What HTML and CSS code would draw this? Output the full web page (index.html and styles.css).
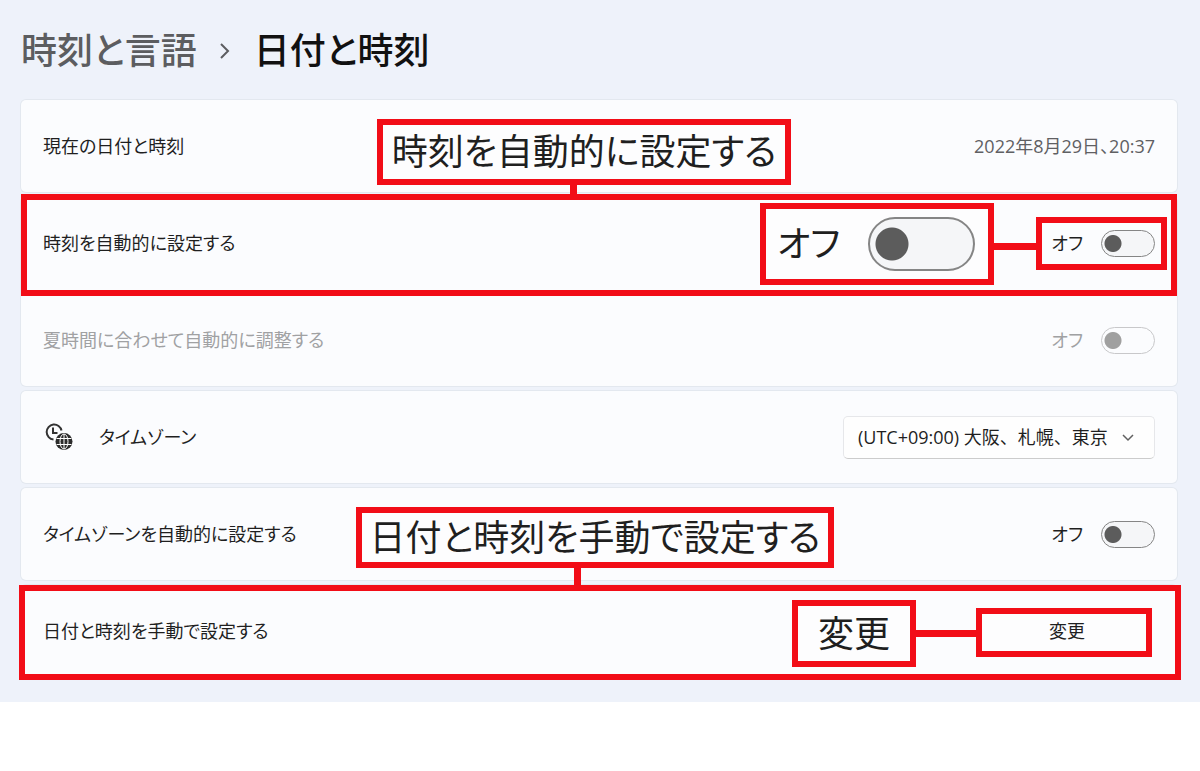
FILE: index.html
```
<!DOCTYPE html>
<html lang="ja">

<head>
  <title>日付と時刻</title>
  <meta charset="utf-8">
  <meta name="viewport" content="width=device-width, initial-scale=1">
  <link rel="stylesheet" href="styles.css">
</head>

<body>
  <main class="settings">
    <!-- Breadcrumb -->
    <h1 class="breadcrumb">
      <a href="#">時刻と言語</a>
      <svg class="crumb-arrow" viewBox="0 0 10 16" aria-hidden="true">
        <path d="M1 1l7 7-7 7" />
      </svg>
      <span>日付と時刻</span>
    </h1>

    <div class="cards">
      <!-- Current date and time -->
      <div class="card">
        <div class="row">
          <span class="name">現在の日付と時刻</span>
          <span class="date">2022年8月29日、20:37</span>
        </div>
      </div>

      <!-- Automatic time and daylight saving -->
      <div class="card">
        <div class="row row-auto">
          <label class="name" for="autoTime">時刻を自動的に設定する</label>
          <span class="state">オフ</span>
          <input class="toggle" type="checkbox" role="switch" id="autoTime">
          <div class="mark mark-row"></div>
          <div class="mark mark-toggle"></div>
          <div class="mark callout callout-auto">時刻を自動的に設定する</div>
          <div class="mark callout callout-off">
            <span>オフ</span>
            <span class="big-toggle"></span>
          </div>
        </div>
        <div class="row disabled">
          <label class="name" for="summerTime">夏時間に合わせて自動的に調整する</label>
          <span class="state">オフ</span>
          <input class="toggle" type="checkbox" role="switch" id="summerTime" disabled>
        </div>
      </div>

      <!-- Time zone -->
      <div class="card">
        <div class="row">
          <svg class="zone-icon" viewBox="0 0 28 28" aria-hidden="true">
            <path class="line" d="M8.500 16.500A7.500 7.500 0 1 1 16.500 7.500" />
            <path class="line" d="M8 4.500V10H12.500" />
            <circle class="globe" cx="19" cy="18.500" r="8.500" />
            <path class="grid" d="M11.500 15.500H26.500M11.500 21.500H26.500M19 11V26" />
            <ellipse class="grid" cx="19" cy="18.500" rx="4" ry="7.500" />
          </svg>
          <label class="name" for="zone">タイムゾーン</label>
          <div class="select-box">
            <select id="zone">
              <option>(UTC+09:00) 大阪、札幌、東京</option>
            </select>
            <svg class="chevron" viewBox="0 0 12 8" aria-hidden="true">
              <path d="M1 1l5 5 5-5" />
            </svg>
          </div>
        </div>
      </div>

      <!-- Automatic time zone -->
      <div class="card">
        <div class="row">
          <label class="name" for="autoZone">タイムゾーンを自動的に設定する</label>
          <span class="state">オフ</span>
          <input class="toggle" type="checkbox" role="switch" id="autoZone">
        </div>
      </div>

      <!-- Manual date and time -->
      <div class="card">
        <div class="row">
          <span class="name">日付と時刻を手動で設定する</span>
          <button class="change" type="button">変更</button>
          <div class="mark mark-row mark-manual"></div>
          <div class="mark callout callout-manual">日付と時刻を手動で設定する</div>
          <div class="mark callout callout-change">変更</div>
        </div>
      </div>
    </div>
  </main>
</body>

</html>
```
FILE: styles.css
```
* {
  box-sizing: border-box;
}

body {
  margin: 0;
  background-color: #ffffff;
  color: #1f1f1f;
  font-family: 'Open Sans', 'Noto Sans CJK JP', sans-serif;
  font-size: 18px;
  line-height: 28px;
  font-feature-settings: "palt";
}

.settings {
  padding: 25px 23px 25px 21px;
  background-color: #eef2fa;
}

/* Breadcrumb */
.breadcrumb {
  display: flex;
  align-items: center;
  margin: 0 0 23px;
  font-size: 36px;
  font-weight: 500;
  line-height: 52px;
  color: #111111;
}

.breadcrumb a {
  color: #5c5d60;
  text-decoration: none;
}

.crumb-arrow {
  width: 10px;
  height: 16px;
  margin: 0 24px 0 23px;
  fill: none;
  stroke: #5c5d60;
  stroke-width: 2;
}

/* Cards */
.cards {
  display: flex;
  flex-direction: column;
  gap: 5px;
}

.card {
  background-color: #fbfcfe;
  border-radius: 5px;
  box-shadow: 0 0 0 1px #e3e8ef;
}

.row {
  position: relative;
  display: flex;
  align-items: center;
  min-height: 92px;
  padding: 0 22px;
}

.row-auto {
  margin-bottom: 5px;
}

.name {
  margin-right: auto;
}

.date {
  color: #5f6063;
}

.state {
  margin-right: 18px;
}

.disabled {
  color: #a0a1a3;
}

/* Switches */
.toggle {
  appearance: none;
  width: 54px;
  height: 27px;
  margin: 0;
  border: 1px solid #858585;
  border-radius: 14px;
  background: radial-gradient(circle at 11px 50%, #5c5c5c 8px, #f5f6f8 9px);
}

.toggle:disabled {
  border-color: #c8c8ca;
  background: radial-gradient(circle at 11px 50%, #a0a0a0 8px, #fbfcfe 9px);
}

/* Time zone */
.zone-icon {
  width: 28px;
  height: 28px;
  margin: 0 26px 0 2px;
  fill: none;
}

.zone-icon .line {
  stroke: #333333;
  stroke-width: 2;
}

.zone-icon .globe {
  fill: #2b2b2b;
}

.zone-icon .grid {
  stroke: #ffffff;
  stroke-width: 1;
}

.select-box {
  position: relative;
}

select {
  appearance: none;
  width: 312px;
  height: 43px;
  padding: 0 14px;
  border: 1px solid #e6e7ea;
  border-bottom-color: #cccccc;
  border-radius: 5px;
  background-color: #fefefe;
  color: inherit;
  font: inherit;
  font-feature-settings: normal;
}

.chevron {
  position: absolute;
  top: 18px;
  right: 21px;
  width: 12px;
  height: 8px;
  fill: none;
  stroke: #606060;
  stroke-width: 1.500;
  pointer-events: none;
}

/* Change button, framed in red */
.change {
  width: 176px;
  height: 49px;
  margin: 3px 3px 0 0;
  padding: 0 0 3px 6px;
  border: 6px solid #f20d17;
  background-color: #fdfdfe;
  color: inherit;
  font: inherit;
}

/* Red marks over the rows */
.mark {
  position: absolute;
  border: 6px solid #f20d17;
  pointer-events: none;
}

.mark-row {
  top: -3px;
  right: 0;
  bottom: -7px;
  left: 0;
}

.mark-manual {
  top: 0;
  right: -4px;
  bottom: -3px;
  left: -2px;
}

.mark-toggle {
  top: 20px;
  right: 10px;
  width: 131px;
  height: 53px;
}

.callout {
  display: flex;
  align-items: center;
  justify-content: center;
  background-color: #fdfdfe;
  font-size: 36px;
  line-height: 48px;
  white-space: nowrap;
}

/* Line from a callout to what it explains */
.callout::after {
  content: "";
  position: absolute;
  background-color: #f20d17;
}

.callout-auto {
  bottom: 104px;
  left: 356px;
  width: 414px;
  height: 66px;
}

.callout-auto::after {
  top: 100%;
  left: 187px;
  width: 7px;
  height: 18px;
}

.callout-manual {
  bottom: 109px;
  left: 335px;
  width: 478px;
  height: 61px;
}

.callout-manual::after {
  top: 100%;
  left: 212px;
  width: 7px;
  height: 26px;
}

.callout-off {
  top: 6px;
  right: 183px;
  width: 234px;
  height: 82px;
  justify-content: space-between;
  padding: 0 13px 0 11px;
}

.callout-off::after {
  top: 34px;
  left: 100%;
  width: 48px;
  height: 7px;
}

.callout-change {
  top: 15px;
  right: 261px;
  width: 124px;
  height: 67px;
}

.callout-change::after {
  top: 24px;
  left: 100%;
  width: 67px;
  height: 7px;
}

.big-toggle {
  width: 107px;
  height: 54px;
  border: 2px solid #858585;
  border-radius: 27px;
  background: radial-gradient(circle at 22px 50%, #5c5c5c 16px, #f5f6f8 17px);
}
```
